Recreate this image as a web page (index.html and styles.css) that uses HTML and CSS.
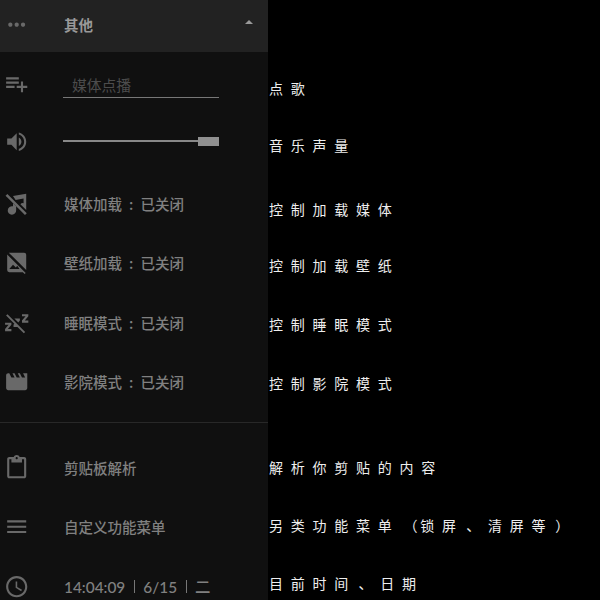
FILE: index.html
```html
<!DOCTYPE html>
<html lang="zh-CN">
<head>
<meta charset="utf-8">
<title>其他</title>
<link rel="stylesheet" href="styles.css">
</head>
<body>
<main class="screen">
  <aside class="panel">
    <header class="row header">
      <svg class="icon" viewBox="0 0 24 24"><path d="M6 10c-1.1 0-2 .9-2 2s.9 2 2 2 2-.9 2-2-.9-2-2-2zm12 0c-1.1 0-2 .9-2 2s.9 2 2 2 2-.9 2-2-.9-2-2-2zm-6 0c-1.1 0-2 .9-2 2s.9 2 2 2 2-.9 2-2-.9-2-2-2z"/></svg>
      <span class="label title">其他</span>
      <span class="caret"></span>
    </header>
    <div class="row request">
      <svg class="icon" viewBox="0 0 24 24"><path d="M14 10H2v2h12v-2zm0-4H2v2h12V6zm4 8v-4h-2v4h-4v2h4v4h2v-4h4v-2h-4zM2 16h8v-2H2v2z"/></svg>
      <div class="field">媒体点播</div>
    </div>
    <div class="row volume">
      <svg class="icon" viewBox="0 0 24 24"><path d="M3 9v6h4l5 5V4L7 9H3zm13.500 3c0-1.770-1.020-3.290-2.500-4.030v8.050c1.480-.730 2.500-2.250 2.500-4.020zM14 3.230v2.060c2.890.860 5 3.540 5 6.710s-2.110 5.850-5 6.710v2.060c4.010-.910 7-4.490 7-8.770s-2.990-7.860-7-8.770z"/></svg>
      <div class="slider"><span class="track"></span><span class="thumb"></span></div>
    </div>
    <div class="row">
      <svg class="icon" viewBox="0 0 24 24"><path d="M8.500 4.800L21 2.500V18l-5.500-5.500a3 3 0 0 1 3-1V7l-7.500 1.500zM8.500 11.500l3 3V18A4 4 0 1 1 8.500 14.500z"/><path d="M3.200 2.800L21.500 21.100l-1.700 1.700L1.500 4.500z"/></svg>
      <span class="label">媒体加载<i class="colon">:</i>已关闭</span>
    </div>
    <div class="row">
      <svg class="icon" viewBox="0 0 24 24"><path d="M4.500 2.500H19a2 2 0 0 1 2 2V19zM3 4.200L20.500 21.700l-1 1L17.800 21H5a2 2 0 0 1-2-2zM5 18h9.700l-2.200-3-1.300 1.500L8.500 14z"/></svg>
      <span class="label">壁纸加载<i class="colon">:</i>已关闭</span>
    </div>
    <div class="row">
      <svg class="icon" viewBox="0 0 24 24"><path d="M2 5.270L3.280 4L20 20.720L18.730 22L12.730 16H9V14L9.790 13.060L2 5.270M23 12H17V10L20.390 6H17V4H23V6L19.620 10H23V12M9.820 8H15V10L13.540 11.720L9.820 8M7 20H1V18L4.390 14H1V12H7V14L3.620 18H7V20Z"/></svg>
      <span class="label">睡眠模式<i class="colon">:</i>已关闭</span>
    </div>
    <div class="row">
      <svg class="icon" viewBox="0 0 24 24"><path d="M18 4l2 4h-3l-2-4h-2l2 4h-3l-2-4H8l2 4H7L5 4H4c-1.100 0-1.990.900-1.990 2L2 18c0 1.100.900 2 2 2h16c1.100 0 2-.900 2-2V4h-4z"/></svg>
      <span class="label">影院模式<i class="colon">:</i>已关闭</span>
    </div>
    <hr class="divider">
    <div class="row">
      <svg class="icon" viewBox="0 0 24 24"><path d="M19 2h-4.180C14.400.840 13.300 0 12 0c-1.300 0-2.400.840-2.820 2H5c-1.100 0-2 .900-2 2v16c0 1.100.900 2 2 2h14c1.100 0 2-.900 2-2V4c0-1.100-.900-2-2-2zm-7 0c.550 0 1 .450 1 1s-.450 1-1 1-1-.450-1-1 .450-1 1-1zm7 18H5V4h2v3h10V4h2v16z"/></svg>
      <span class="label">剪贴板解析</span>
    </div>
    <div class="row">
      <svg class="icon" viewBox="0 0 24 24"><path d="M3 18h18v-2H3v2zm0-5h18v-2H3v2zm0-7v2h18V6H3z"/></svg>
      <span class="label">自定义功能菜单</span>
    </div>
    <div class="row">
      <svg class="icon" viewBox="0 0 24 24"><path d="M12 2C6.500 2 2 6.500 2 12s4.500 10 10 10 10-4.500 10-10S17.500 2 12 2zm0 18c-4.400 0-8-3.600-8-8s3.600-8 8-8 8 3.600 8 8-3.600 8-8 8zm.500-13H11v6l5.200 3.200.8-1.300-4.500-2.700V7z"/></svg>
      <span class="label clock">14:04:09<i class="bar"></i>6/15<i class="bar"></i>二</span>
    </div>
  </aside>
  <section class="notes">
    <p class="note n-request">点歌</p>
    <p class="note n-volume">音乐声量</p>
    <p class="note n-media">控制加载媒体</p>
    <p class="note n-wallpaper">控制加载壁纸</p>
    <p class="note">控制睡眠模式</p>
    <p class="note">控制影院模式</p>
    <p class="note n-clipboard">解析你剪贴的内容</p>
    <p class="note n-menu">另类功能菜单<span class="open">（</span>锁屏<span class="comma">、</span>清屏等<span class="close">）</span></p>
    <p class="note n-time">目前时间<span class="comma">、</span>日期</p>
  </section>
</main>
</body>
</html>
```
FILE: styles.css
```css
* { box-sizing: border-box; }

body {
  margin: 0;
  background: #000;
  font-family: "Noto Sans CJK SC", sans-serif;
}

.screen {
  display: flex;
  width: 600px;
  height: 600px;
  overflow: hidden;
}

.panel {
  flex: none;
  width: 268px;
  height: 600px;
  overflow: hidden;
  background: #101010;
  color: #808080;
}

.row {
  display: flex;
  align-items: center;
  height: 59.5px;
  padding-left: 4px;
}

.icon {
  flex: none;
  width: 25.4px;
  height: 25.4px;
  margin-right: 34px;
  fill: #696969;
}

.label {
  display: flex;
  align-items: center;
  margin-left: 0.6px;
  font-size: 14.5px;
  font-weight: 500;
  line-height: 20px;
  white-space: nowrap;
}

.colon {
  width: 18.5px;
  font-style: normal;
  text-align: center;
}

.header {
  height: 52px;
  padding-bottom: 3px;
  background: #222;
}

.title {
  color: #999;
  font-weight: 700;
}

.caret {
  margin: 0 15px 5px auto;
  border: 4.500px solid transparent;
  border-top-width: 0;
  border-bottom-color: #999;
}

.request { height: 64px; }

.field {
  width: 156px;
  height: 27px;
  margin-top: 1px;
  margin-left: -0.5px;
  padding-left: 9px;
  border-bottom: 1px solid #777;
  color: #4c4c4c;
  font-size: 14.8px;
  line-height: 27px;
}

.volume {
  height: 50.75px;
  margin-bottom: 7px;
}

.slider {
  display: flex;
  align-items: center;
  width: 156.500px;
  margin-left: -0.5px;
}

.track {
  flex: 1;
  height: 2px;
  background: #888;
}

.thumb {
  width: 21.500px;
  height: 9px;
  background: #909090;
}

.divider {
  height: 1px;
  margin: 10px 0 15px;
  border: 0;
  background: #282828;
}

.clock {
  font-family: Lato, "Noto Sans CJK SC", sans-serif;
  font-size: 15.4px;
}

.bar {
  width: 1px;
  height: 13px;
  margin: 0 8.500px;
  background: #777;
}

.notes {
  flex: 1;
  padding-top: 78px;
}

.note {
  height: 20px;
  margin: 0 0 39px 1px;
  color: #eee;
  font-size: 14px;
  letter-spacing: 7.75px;
  line-height: 20px;
  white-space: nowrap;
}

.open {
  margin-left: 4px;
  letter-spacing: 2.750px;
}
.comma { margin-left: 2.5px; }
.close { margin-left: 2px; }

.n-request { margin-bottom: 37px; }
.n-volume { margin-bottom: 44px; }
.n-media { margin-bottom: 36px; }
.n-wallpaper { margin-bottom: 39px; }
.n-clipboard { margin-top: 64px; margin-bottom: 38px; }
.n-menu { margin-bottom: 38px; }
.n-time { margin-bottom: 0; }
```
